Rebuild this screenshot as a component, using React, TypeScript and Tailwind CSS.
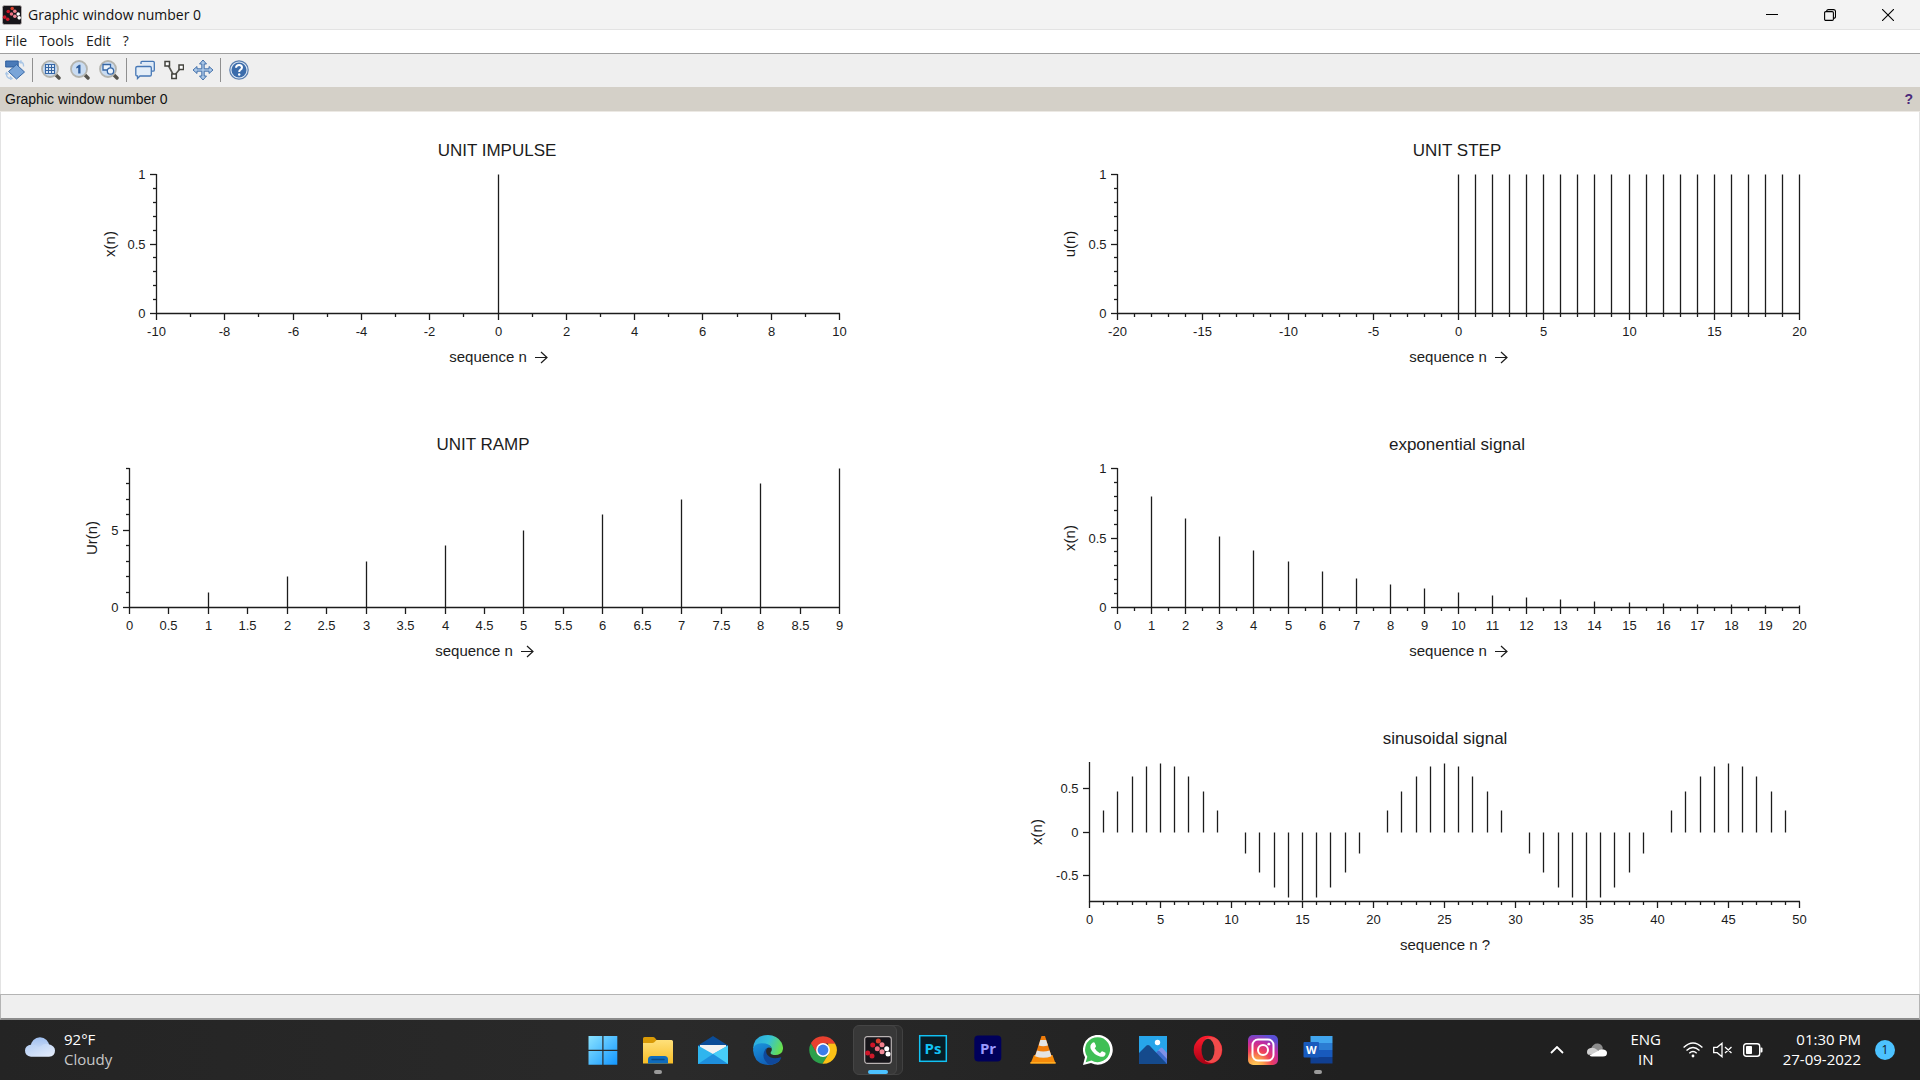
import React from "react";

/* ---------- Plots ---------- */

type Tick = { v: number; label?: string };
type PlotProps = {
  title: string;
  titleX: number;
  xLabel: string;
  xLabelX: number;
  arrow?: boolean;
  yLabel: string;
  yLabelX: number;
  left: number;
  xRange: [number, number];
  yRange: [number, number];
  xTicks: Tick[];
  yTicks: Tick[];
  base?: number;
  stems: [number, number][];
};

const RIGHT = 839;
const TOP = 62;
const BOTTOM = 201;

const range = (from: number, to: number, step = 1) =>
  Array.from({ length: Math.round((to - from) / step) + 1 }, (_, i) => Math.round((from + i * step) * 100) / 100);

const ticks = (from: number, to: number, step: number, isMajor: (v: number, i: number) => boolean): Tick[] =>
  range(from, to, step).map((v, i) => ({ v, label: isMajor(v, i) ? String(v) : undefined }));

function Plot(p: PlotProps) {
  const px = (v: number) =>
    Math.round(p.left + ((v - p.xRange[0]) / (p.xRange[1] - p.xRange[0])) * (RIGHT - p.left)) + 0.5;
  const py = (v: number) =>
    Math.round(BOTTOM - ((v - p.yRange[0]) / (p.yRange[1] - p.yRange[0])) * (BOTTOM - TOP)) + 0.5;
  const x0 = px(p.xRange[0]);
  const y0 = py(p.yRange[0]);
  const base = py(p.base ?? p.yRange[0]);
  return (
    <svg viewBox="0 0 960 294" role="img" aria-label={p.title} className="block w-full font-['Liberation_Sans',Arial,sans-serif]">
      <g stroke="#1c1c1c" strokeWidth="1.3" fill="none">
        <path d={`M${x0} ${py(p.yRange[1]) - 0.5}V${y0}H${px(p.xRange[1]) + 0.5}`} />
        {p.xTicks.map((t) => (
          <path key={t.v} d={`M${px(t.v)} ${y0}v${t.label ? 6.5 : 3.5}`} />
        ))}
        {p.yTicks.map((t) => (
          <path key={t.v} d={`M${x0} ${py(t.v)}h${t.label ? -6.5 : -3.5}`} />
        ))}
        {p.stems.filter(([, v]) => Math.abs(v) > 0.001).map(([n, v]) => (
          <path key={n} d={`M${px(n)} ${base}V${py(v)}`} />
        ))}
      </g>
      <g fill="#1c1c1c">
        <g fontSize="13">
          {p.xTicks.map((t) => t.label && (
            <text key={t.v} x={px(t.v)} y="224" textAnchor="middle">{t.label}</text>
          ))}
          {p.yTicks.map((t) => t.label && (
            <text key={t.v} x={x0 - 11} y={py(t.v) + 4} textAnchor="end">{t.label}</text>
          ))}
        </g>
        <text x={p.titleX} y="44" fontSize="17" textAnchor="middle">{p.title}</text>
        <text x={p.arrow ? p.xLabelX - 11 : p.xLabelX} y="250" fontSize="15" textAnchor="middle">{p.xLabel}</text>
        <text transform={`translate(${p.yLabelX + 5} 132) rotate(-90)`} fontSize="15" textAnchor="middle">{p.yLabel}</text>
      </g>
      {p.arrow && (
        <path d={`M${p.xLabelX + 36} 245.500h12M${p.xLabelX + 42} 240l6 5.500l-6 5.500`} stroke="#1c1c1c" strokeWidth="1.2" fill="none" />
      )}
    </svg>
  );
}

const unitY = ticks(0, 1, 0.1, (v) => v === 0 || v === 0.5 || v === 1);

function Impulse() {
  return (
    <Plot title="UNIT IMPULSE" titleX={497} xLabel="sequence n" xLabelX={499} arrow yLabel="x(n)" yLabelX={110}
      left={156} xRange={[-10, 10]} yRange={[0, 1]} xTicks={ticks(-10, 10, 1, (v) => v % 2 === 0)} yTicks={unitY}
      stems={[[0, 1]]} />
  );
}

function Step() {
  return (
    <Plot title="UNIT STEP" titleX={497} xLabel="sequence n" xLabelX={499} arrow yLabel="u(n)" yLabelX={110}
      left={157} xRange={[-20, 20]} yRange={[0, 1]} xTicks={ticks(-20, 20, 1, (v) => v % 5 === 0)} yTicks={unitY}
      stems={range(0, 20).map((n) => [n, 1])} />
  );
}

function Ramp() {
  return (
    <Plot title="UNIT RAMP" titleX={483} xLabel="sequence n" xLabelX={485} arrow yLabel="Ur(n)" yLabelX={92}
      left={129} xRange={[0, 9]} yRange={[0, 9]} xTicks={ticks(0, 9, 0.5, () => true)}
      yTicks={ticks(0, 9, 1, (v) => v % 5 === 0)} stems={range(1, 9).map((n) => [n, n])} />
  );
}

function Exponential() {
  return (
    <Plot title="exponential signal" titleX={497} xLabel="sequence n" xLabelX={499} arrow yLabel="x(n)" yLabelX={110}
      left={157} xRange={[0, 20]} yRange={[0, 1]} xTicks={ticks(0, 20, 0.5, (v) => v % 1 === 0)} yTicks={unitY}
      stems={range(1, 20).map((n) => [n, 0.8 ** n])} />
  );
}

function Sinusoid() {
  return (
    <Plot title="sinusoidal signal" titleX={485} xLabel="sequence n ?" xLabelX={485} yLabel="x(n)" yLabelX={77}
      left={129} xRange={[0, 50]} yRange={[-0.8, 0.8]} xTicks={ticks(0, 50, 1, (v) => v % 5 === 0)}
      yTicks={ticks(-0.5, 0.5, 0.5, () => true)} base={0}
      stems={range(1, 49).map((n) => [n, 0.79 * Math.sin((Math.PI * n) / 10)])} />
  );
}

/* ---------- Icons ---------- */

const dots: [number, number, string][] = [
  [14.300, 5, "#d8402c"], [8.700, 9, "#cf1528"], [18, 8.700, "#ef7f8c"], [13.300, 12.700, "#ee6f80"],
  [22.700, 12.700, "#ffffff"], [18, 15.700, "#f08a98"], [24, 18, "#ffffff"], [3.700, 17, "#cf1528"], [8, 20, "#d01a2a"],
];

function Scilab({ className }: { className: string }) {
  return (
    <svg viewBox="0 0 28 28" className={className} aria-hidden="true">
      <rect x="0.700" y="0.700" width="26.600" height="26.600" rx="2.500" fill="#17151a" stroke="#b9b3b3" strokeWidth="1.200" />
      {dots.map(([x, y, c]) => <circle key={`${x}-${y}`} cx={x} cy={y} r="2.500" fill={c} />)}
    </svg>
  );
}

const box = "0 0 20 20";
const ic = "size-5";

const Lens = ({ children }: { children: React.ReactNode }) => (
  <svg viewBox={box} className={ic} aria-hidden="true">
    <path d="M14.500 14.500l3.500 3.500" stroke="#55534c" strokeWidth="3.400" strokeLinecap="round" />
    <circle cx="9" cy="9" r="8" fill="#c9dcf2" stroke="#b4b4ae" strokeWidth="1.800" />
    {children}
  </svg>
);

const RotateIcon = () => (
  <svg viewBox={box} className={ic} aria-hidden="true">
    <path d="M15 1.500q4 1 3.500 5M1.500 13q-.500 5 4 5.500M3.500 14.500l-2-2-1 2M16.500.500l-2 1.500 2 1.500M5 16.500l2 2-2 1" fill="none" stroke="#a9c6e6" strokeWidth="1.300" />
    <path d="M.700 1h12.500v6H.700z" fill="#4a7ab8" stroke="#2f5e9e" />
    <path d="M3.500 11.500L11.500 4.500l8 7.500-8 7z" fill="#7aa5d8" stroke="#3566a5" />
  </svg>
);
const GridLens = () => (
  <Lens>
    <path d="M4.500 4.500h9v9h-9zM7.500 4.500v9M10.500 4.500v9M4.500 7.500h9M4.500 10.500h9" fill="#eef5fc" stroke="#3566a5" strokeWidth="1.200" />
  </Lens>
);
const OneLens = () => (
  <Lens><path d="M6.300 7L9 4.700h1.500v8.800H8.200V7.800l-1.900.8z" fill="#2f5e9e" /></Lens>
);
const ShapesLens = () => (
  <Lens>
    <path d="M4 4.500h7.500v5.500H4z" fill="#eef5fc" stroke="#3566a5" strokeWidth="1.300" />
    <circle cx="11.500" cy="11" r="3.200" fill="#eef5fc" stroke="#3566a5" strokeWidth="1.300" />
  </Lens>
);
const WindowsIcon = () => (
  <svg viewBox={box} className={ic} aria-hidden="true">
    <path d="M6 4V2.300q0-1 1-1h11q1.300 0 1.300 1.200v7.500q0 1.200-1.300 1.200h-1" fill="#dfeaf6" stroke="#4677b5" strokeWidth="1.300" />
    <path d="M2.500 6.500h12.500q1.300 0 1.300 1.300v7q0 1.200-1.300 1.200H5l-2.500 2.500v-2.500q-1.700 0-1.700-1.200v-7q0-1.300 1.700-1.300z" fill="#e4eef8" stroke="#4677b5" strokeWidth="1.300" />
  </svg>
);
const NodesIcon = () => (
  <svg viewBox={box} className={ic} aria-hidden="true">
    <path d="M3.500 4L10 16L17.500 7" fill="none" stroke="#55554f" strokeWidth="1.600" />
    <path d="M1 1.500h4.500v4.500H1zM7.800 14h4.500v4.500h-4.500zM15 5h4.500v4.500H15z" fill="#fff" stroke="#44443f" strokeWidth="1.500" />
  </svg>
);
const MoveIcon = () => (
  <svg viewBox={box} className={ic} aria-hidden="true">
    <path d="M10 0l3.500 4h-2.300v4.800H16V6.500l4 3.500-4 3.500v-2.300h-4.800V16h2.300L10 20l-3.500-4h2.300v-4.800H4v2.300L0 10l4-3.500v2.300h4.800V4H6.500z" fill="#a9c6e6" stroke="#3566a5" strokeWidth="0.900" />
  </svg>
);
const HelpIcon = () => (
  <svg viewBox={box} className={ic} aria-hidden="true">
    <circle cx="10" cy="10" r="9.200" fill="#dfe9f5" stroke="#5a7fb0" strokeWidth="1.200" />
    <circle cx="10" cy="10" r="7.500" fill="#3b6cab" />
    <path d="M7 7.800Q7.200 5 10.100 5Q13 5 13 7.500Q13 9 11.300 9.900Q10.200 10.500 10.200 12" fill="none" stroke="#fff" strokeWidth="2" />
    <circle cx="10.200" cy="14.500" r="1.200" fill="#fff" />
  </svg>
);

const big = "size-[30px]";
const b30 = "0 0 30 30";

const StartIcon = () => (
  <svg viewBox={b30} className={big} aria-hidden="true">
    <defs><linearGradient id="st" x1="0" y1="0" x2="1" y2="1"><stop offset="0" stopColor="#8be3ff" /><stop offset="1" stopColor="#1296ff" /></linearGradient></defs>
    <path d="M0.500 1h13.800v13.800H.500zM15.500 1h13.800v13.800H15.500zM.500 16h13.800v13.800H.500zM15.500 16h13.800v13.800H15.500z" fill="url(#st)" />
  </svg>
);
const FolderIcon = () => (
  <svg viewBox={b30} className={big} aria-hidden="true">
    <defs><linearGradient id="fo" x1="0" y1="0" x2="0" y2="1"><stop offset="0" stopColor="#ffe07a" /><stop offset="1" stopColor="#f7bd27" /></linearGradient></defs>
    <path d="M0 3.500Q0 2 1.500 2h8.500q1.200 0 2 1l2 2.500H28V10H0z" fill="#d99a06" />
    <path d="M0 8h9.500q1 0 1.800-.8L13.500 5H28.500Q30 5 30 6.500V28.500H0z" fill="url(#fo)" />
    <path d="M5 28.500v-4Q5 21 8.500 21h13Q25 21 25 24.500v4z" fill="#0f6cbd" />
    <path d="M9 24.500h12" stroke="#0a4a86" strokeWidth="1.400" strokeLinecap="round" />
  </svg>
);
const MailIcon = () => (
  <svg viewBox={b30} className={big} aria-hidden="true">
    <path d="M0 10.500L15 1l15 9.500-15 11z" fill="#0b4c97" />
    <path d="M2 10h26v6l-13 8-13-8z" fill="#f2f2f2" />
    <path d="M0 10.500L15 19l15-8.500V29H0z" fill="#2fb5ee" />
    <path d="M15 19l15-8.500V29z" fill="#47cdf8" />
    <path d="M0 29l15-10 15 10z" fill="#1e8fdd" />
  </svg>
);
const EdgeIcon = () => (
  <svg viewBox={b30} className={big} aria-hidden="true">
    <defs>
      <linearGradient id="ed" x1="0" y1="0.200" x2="1" y2="0.500"><stop offset="0" stopColor="#2aa8e0" /><stop offset="0.500" stopColor="#35c1d8" /><stop offset="1" stopColor="#68e04c" /></linearGradient>
      <linearGradient id="ed2" x1="0" y1="0" x2="0.600" y2="1"><stop offset="0" stopColor="#1b95dc" /><stop offset="1" stopColor="#0f5bb5" /></linearGradient>
    </defs>
    <path d="M0 14Q1 0 15 0Q24 0 28.500 7.500Q32 15 27.500 18.500Q23.500 21 19 19.500Q16.500 18.500 18.500 16Q20 11 14 10Q6 8 0 14z" fill="url(#ed)" />
    <path d="M0 15Q1 8 9 8.300Q17 8.500 18.500 13Q13 11 12.500 17Q13 26 22 26.500Q27 25 28 24Q24 30 15 30Q1 29 0 15z" fill="url(#ed2)" />
    <path d="M12.500 14Q8.500 20 12 25.500Q14.500 29.500 17 29.800Q24.500 29 28.300 23Q28 22 27 22.500Q19 25 14.500 20Q12 17 14 13z" fill="#10489a" />
  </svg>
);
const ChromeIcon = () => (
  <svg viewBox={b30} className={big} aria-hidden="true">
    <path d="M3 8.200A13.800 13.800 0 0 1 27 8.200H15z" fill="#e8402f" />
    <path d="M3 8.200A13.800 13.800 0 0 0 14.500 28.800L21 18.500 15 15 9.200 18.500z" fill="#2ca04b" />
    <path d="M27 8.200A13.800 13.800 0 0 1 14.500 28.800L21 18.200 20 8.200z" fill="#fbc116" />
    <path d="M3 8.200L9 18.400 15 8.500H27.100L24 5H6z" fill="#e8402f" />
    <circle cx="15" cy="15" r="6.900" fill="#fff" /><circle cx="15" cy="15" r="5.400" fill="#3b7dea" />
  </svg>
);
const PsIcon = () => (
  <svg viewBox={b30} className={big} aria-hidden="true">
    <rect x="1.700" y="0.700" width="26.600" height="25.600" fill="#071c26" stroke="#12c2f3" strokeWidth="1.500" />
    <text x="15" y="18.500" textAnchor="middle" fontSize="15" fontWeight="700" fill="#12c2f3">Ps</text>
  </svg>
);
const PrIcon = () => (
  <svg viewBox={b30} className={big} aria-hidden="true">
    <rect x="1.300" y="0.500" width="27" height="26" rx="4" fill="#00005b" />
    <text x="15" y="18.500" textAnchor="middle" fontSize="15" fontWeight="700" fill="#9a99ff">Pr</text>
  </svg>
);
const VlcIcon = () => (
  <svg viewBox={b30} className={big} aria-hidden="true">
    <path d="M6 20h18.500l3 8.500h-25z" fill="#f78b0a" />
    <path d="M13.500 1h3.500l6.500 20q-8 3-16.500 0z" fill="#f07d0c" />
    <path d="M12.300 5h5.800l1.800 5.500q-4.800 1.500-9.200 0zM9 15.500q6 2 12.600 0l1.900 5.800q-8 3-16.500 0z" fill="#e4e4e4" />
    <path d="M2.500 27h25l.300 1.500H2.200z" fill="#ffad22" />
  </svg>
);
const WhatsAppIcon = () => (
  <svg viewBox={b30} className={big} aria-hidden="true">
    <path d="M0 30l2-7.700A14.900 14.900 0 1 1 8 28z" fill="#fff" />
    <path d="M2.700 27.200l1.600-5.400A12.500 12.500 0 1 1 8.500 25.600z" fill="#3fbf55" />
    <path d="M9.500 7.800q1.600-1 2.300.3l1.200 2.900q.200.800-1.300 2.300 2 3.700 5.300 4.900 1.300-1.600 1.900-1.900.700-.200 3.600 1.500.400 1.900-1 3.100-2 1.500-4.600.6-6.500-2-9.200-7.700-1.200-4 1.800-6z" fill="#fff" />
  </svg>
);
const PhotosIcon = () => (
  <svg viewBox={b30} className={big} aria-hidden="true">
    <path d="M1 1h28v28H1z" fill="#27a5ea" />
    <path d="M15 21l7.500-8q1-.800 2 0l4.500 5v11H15z" fill="#7f92e8" />
    <path d="M13 29l6-12.500q1.500-1.500 3 0L29 24v5z" fill="#3f6fd0" />
    <path d="M1 18l7.500-7.500q1.500-1 3 0L29 29H1z" fill="#154a8c" />
    <circle cx="19.500" cy="7.500" r="2.700" fill="#fff" />
  </svg>
);
const OperaIcon = () => (
  <svg viewBox={b30} className={big} aria-hidden="true">
    <defs><linearGradient id="op" x1="0" y1="0" x2="0" y2="1"><stop offset="0" stopColor="#ff1b2d" /><stop offset="1" stopColor="#a70014" /></linearGradient></defs>
    <circle cx="15" cy="15" r="14.300" fill="url(#op)" />
    <path d="M12 4Q20-1 26 6Q32 15 26 24Q20 31 12 26z" fill="#f24b4b" />
    <ellipse cx="15" cy="15" rx="6.500" ry="11.300" fill="#232323" />
  </svg>
);
const InstagramIcon = () => (
  <svg viewBox={b30} className={big} aria-hidden="true">
    <defs>
      <radialGradient id="ig" cx="0.250" cy="1.050" r="1.100"><stop offset="0" stopColor="#ffd65c" /><stop offset="0.250" stopColor="#fca04a" /><stop offset="0.500" stopColor="#ee3f5c" /><stop offset="0.750" stopColor="#c32ba0" /><stop offset="1" stopColor="#5b50d6" /></radialGradient>
    </defs>
    <rect width="30" height="30" rx="5" fill="url(#ig)" />
    <rect x="4.500" y="4.500" width="21" height="21" rx="5.500" fill="none" stroke="#fff" strokeWidth="2" />
    <circle cx="15" cy="15" r="5" fill="none" stroke="#fff" strokeWidth="2" />
    <circle cx="20.800" cy="9.200" r="1.400" fill="#fff" />
  </svg>
);
const WordIcon = () => (
  <svg viewBox={b30} className={big} aria-hidden="true">
    <path d="M7.500 1h22v7h-22z" fill="#41a5ee" /><path d="M7.500 8h22v7h-22z" fill="#2b7cd3" />
    <path d="M7.500 15h22v7h-22z" fill="#185abd" /><path d="M7.500 22h22v6.500h-22z" fill="#103f91" />
    <rect x="0.500" y="7" width="15.500" height="15.500" rx="1" fill="#185abd" />
    <text x="8.200" y="18.500" textAnchor="middle" fontSize="11" fontWeight="700" fill="#fff">W</text>
  </svg>
);

/* ---------- Window parts ---------- */

function TitleBar() {
  return (
    <header className="flex h-[29px] shrink-0 items-center bg-[#f3f3f3] pl-[2px] pr-[3px]">
      <Scilab className="size-5" />
      <h1 className="ml-[6px] flex-1 text-[14px] leading-5 text-[#111]">Graphic window number 0</h1>
      <button aria-label="Minimize" className="grid h-7 w-[58px] place-items-center">
        <svg viewBox="0 0 12 12" className="size-3" aria-hidden="true"><path d="M0 5.500h12" stroke="#000" /></svg>
      </button>
      <button aria-label="Restore" className="grid h-7 w-[58px] place-items-center">
        <svg viewBox="0 0 12 12" className="size-3" fill="none" stroke="#000" strokeWidth="1.100" aria-hidden="true">
          <rect x="0.600" y="2.600" width="8.800" height="8.800" rx="1.200" /><path d="M2.600 2.500Q2.600.600 4.500.600H9.500Q11.500.600 11.500 2.600V7.500Q11.500 9.400 9.500 9.400" />
        </svg>
      </button>
      <button aria-label="Close" className="grid h-7 w-[58px] place-items-center">
        <svg viewBox="0 0 12 12" className="size-3" aria-hidden="true"><path d="M0 0l12 12M12 0L0 12" stroke="#000" strokeWidth="1.100" /></svg>
      </button>
    </header>
  );
}

function MenuBar() {
  return (
    <nav className="flex h-[25px] shrink-0 items-center gap-3 border-b border-t border-b-[#a0a0a0] border-t-[#e3e3e3] bg-white pb-px pl-[5px] text-[14px] leading-5 text-[#1a1a1a]">
      {["File", "Tools", "Edit", "?"].map((m) => <button key={m}>{m}</button>)}
    </nav>
  );
}

const tools: ([string, () => React.JSX.Element] | null)[] = [
  ["Rotate", RotateIcon], null, ["Zoom area", GridLens], ["Original view", OneLens], ["Zoom shape", ShapesLens], null,
  ["Datatips", WindowsIcon], ["Curve nodes", NodesIcon], ["Move", MoveIcon], null, ["Help", HelpIcon],
];

function Toolbar() {
  return (
    <div role="toolbar" aria-label="Graphic tools" className="flex h-[33px] shrink-0 items-center bg-[#efefef] pb-px">
      {tools.map((t, i) => {
        if (!t) return <div key={i} className="flex w-[7px] justify-center"><div className="h-6 w-px bg-[#8f8f8f]" /></div>;
        const [name, Icon] = t;
        return <button key={i} aria-label={name} className="flex w-[29px] justify-center"><Icon /></button>;
      })}
    </div>
  );
}

const apps: [string, () => React.JSX.Element, ("open" | "active")?][] = [
  ["Start", StartIcon], ["File Explorer", FolderIcon, "open"], ["Mail", MailIcon], ["Edge", EdgeIcon], ["Chrome", ChromeIcon],
  ["Scilab", () => <Scilab className="size-7" />, "active"], ["Photoshop", PsIcon], ["Premiere Pro", PrIcon], ["VLC", VlcIcon],
  ["WhatsApp", WhatsAppIcon], ["Photos", PhotosIcon], ["Opera", OperaIcon], ["Instagram", InstagramIcon], ["Word", WordIcon, "open"],
];

function Taskbar() {
  return (
    <footer className="grid h-[60px] shrink-0 grid-cols-[1fr_auto_1fr] items-center bg-linear-to-r from-[#242424] via-[#2a2a2a] via-35% to-[#202020] to-70% text-[15px] leading-5 text-white">
      <button className="flex items-center gap-[9px] justify-self-start pb-[2px] pl-[25px] text-left">
        <svg viewBox="0 0 30 20" className="mt-[-4px] h-5 w-[30px]" aria-hidden="true">
          <defs>
            <linearGradient id="cl" x1="0" y1="0" x2="0" y2="1"><stop offset="0" stopColor="#9fbff0" /><stop offset="1" stopColor="#dfe9f8" /></linearGradient>
            <linearGradient id="cl2" x1="0" y1="0" x2="1" y2="1"><stop offset="0" stopColor="#b3cdf4" /><stop offset="1" stopColor="#e6eefb" /></linearGradient>
          </defs>
          <circle cx="15" cy="9.500" r="9.300" fill="url(#cl)" />
          <path d="M6.500 7.500q4-.500 6.500 2.500l3-1q3-3 7-2 7 1.500 7 6.500 0 6-6 6.200H6Q0 19 0 13.500 0 8.500 6.500 7.500z" fill="url(#cl2)" />
        </svg>
        <span><span className="block">92°F</span><span className="block text-[#c8c8c8]">Cloudy</span></span>
      </button>
      <nav aria-label="Apps" className="flex">
        {apps.map(([name, Icon, state]) => (
          <button key={name} aria-label={name} className="relative grid h-[60px] w-[55px] place-items-center">
            {state === "active" && (
              <>
                <span className="absolute top-[5px] left-2 h-[50px] w-[45px] rounded-md border border-[#414141] bg-[#303030]" />
                <span className="absolute top-[5px] left-[3px] h-[50px] w-11 rounded-md border border-[#454545] bg-[#383838]" />
              </>
            )}
            <span className="relative"><Icon /></span>
            {state === "open" && <span className="absolute bottom-[6px] h-1 w-2 rounded-full bg-[#9b9b9b]" />}
            {state === "active" && <span className="absolute bottom-[6px] h-1 w-5 rounded-full bg-[#4cc2ff]" />}
          </button>
        ))}
      </nav>
      <div className="flex items-center justify-self-end pb-px pr-[25px]">
        <button aria-label="Show hidden icons" className="w-[14px]">
          <svg viewBox="0 0 14 8" className="h-2 w-[14px]" fill="none" aria-hidden="true"><path d="M1 7l6-6 6 6" stroke="#fff" strokeWidth="1.800" /></svg>
        </button>
        <button aria-label="OneDrive" className="ml-[23px]">
          <svg viewBox="0 0 20 14" className="h-[14px] w-5" aria-hidden="true">
            <path d="M4 6Q6 0 11 .500q4 .500 5 5l-6 3z" fill="#8c8c8c" /><path d="M0 9q0-4 5-4.300 3 0 5 2l6 5H4Q0 12.500 0 9z" fill="#cfcfcf" />
            <path d="M2.500 12.500L11 8q2-2.500 5.500-1.500Q20 7 20 10q0 3.500-4 3.500H5q-1.500 0-2.500-1z" fill="#fff" />
          </svg>
        </button>
        <button className="ml-[21px] w-9 pb-px text-center">ENG<br />IN</button>
        <button aria-label="Network, volume and battery" className="ml-[19px] flex items-center gap-[10px]">
          <svg viewBox="0 0 20 16" className="h-4 w-5" fill="none" stroke="#fff" strokeWidth="1.400" aria-hidden="true">
            <path d="M.600 5.500q9.400-9 18.800 0M3.500 8.500q6.500-6 13 0M6.300 11.300q3.700-3.400 7.400 0" /><circle cx="10" cy="14" r="1.400" fill="#fff" stroke="none" />
          </svg>
          <svg viewBox="0 0 20 16" className="h-4 w-5" fill="none" stroke="#fff" strokeWidth="1.300" aria-hidden="true">
            <path d="M.700 5.300h3.500L9 1.300v13.400l-4.800-4H.700zM12 5l6.500 6M18.500 5L12 11" />
          </svg>
          <svg viewBox="0 0 20 14" className="h-[14px] w-5" aria-hidden="true">
            <rect x="0.700" y="0.700" width="16" height="12.600" rx="2.500" fill="none" stroke="#fff" strokeWidth="1.400" />
            <rect x="3" y="3" width="6" height="8" rx="0.800" fill="#fff" /><path d="M17.500 4.500h1q1 0 1 1v3q0 1-1 1h-1z" fill="#fff" />
          </svg>
        </button>
        <button className="ml-[20px] pb-px text-right">01:30 PM<br />27-09-2022</button>
        <button aria-label="1 notification" className="ml-[14px] grid size-5 place-items-center rounded-full bg-[#4cc2ff] text-[12px] leading-none text-[#10202a]">1</button>
      </div>
    </footer>
  );
}

export default function App() {
  return (
    <div className="flex min-h-screen flex-col bg-white font-['Open_Sans','Noto_Sans',sans-serif]">
      <TitleBar />
      <MenuBar />
      <Toolbar />
      <div className="flex h-[25px] shrink-0 items-center justify-between border-b border-[#ece9e4] bg-[#d4d0c8] pl-[5px] pr-[7px] font-['Liberation_Sans',Arial,sans-serif] text-[14px] leading-5 text-[#111]">
        <span>Graphic window number 0</span>
        <button aria-label="Help" className="font-bold text-[#4b2a7b]">?</button>
      </div>
      <main className="grid flex-1 grid-cols-2 content-start inset-shadow-[1px_0_0_#e3e3e3,-1px_0_0_#e3e3e3]">
        <Impulse />
        <Step />
        <Ramp />
        <Exponential />
        <div className="col-start-2"><Sinusoid /></div>
      </main>
      <div role="status" className="h-[26px] shrink-0 border border-b-2 border-[#b4b4b4] border-b-[#8c8c8c] bg-[#efefef]" />
      <Taskbar />
    </div>
  );
}
